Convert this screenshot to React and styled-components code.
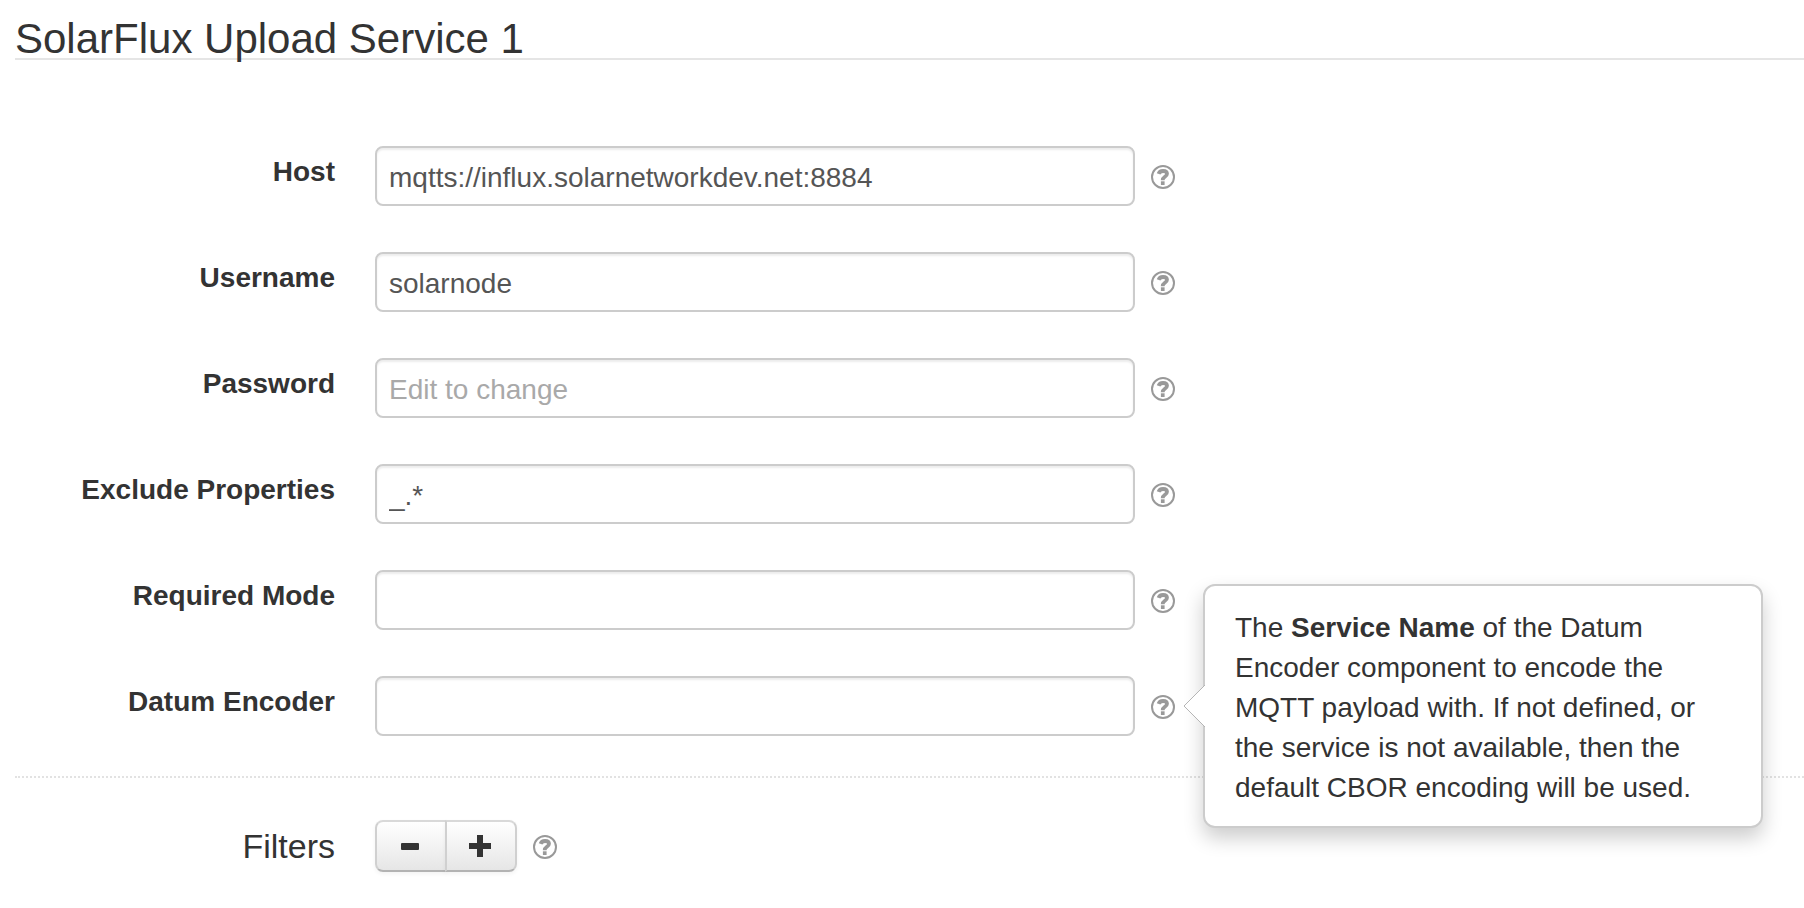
import React from "react";
import styled, { createGlobalStyle } from "styled-components";

const GlobalStyle = createGlobalStyle`
  *, *::before, *::after {
    box-sizing: border-box;
  }
  body {
    margin: 0;
    background: #fff;
    color: #333;
    font-family: "Helvetica Neue", "Liberation Sans", Arial, sans-serif;
    font-size: 28px;
    line-height: 40px;
  }
`;

const Page = styled.main`
  padding: 20px 0 36px 15px;
  overflow-x: hidden;
`;

const Title = styled.h1`
  margin: 0;
  border-bottom: 2px solid #e5e5e5;
  font-size: 42px;
  font-weight: 400;
  line-height: 38px;
`;

const Form = styled.form`
  padding-top: 86px;
`;

const Fields = styled.div`
  display: flex;
  flex-direction: column;
  gap: 46px;
  padding-bottom: 40px;
  border-bottom: 2px dotted #e2e2e2;
`;

const Row = styled.div`
  display: grid;
  grid-template-columns: 320px minmax(0, 1fr);
  column-gap: 40px;
  align-items: start;
`;

const FieldLabel = styled.label`
  padding-top: 6px;
  font-weight: 700;
  text-align: right;
`;

const Controls = styled.div`
  display: flex;
  align-items: center;
  gap: 16px;
`;

const TextInput = styled.input`
  flex: 0 1 760px;
  min-width: 0;
  height: 60px;
  padding: 4px 12px 0;
  border: 2px solid #ccc;
  border-radius: 8px;
  background: #fff;
  box-shadow: inset 0 2px 2px rgba(0, 0, 0, 0.075);
  color: #555;
  font: inherit;
  outline: none;

  &::placeholder {
    color: #a9a9a9;
    opacity: 1;
  }
`;

const HelpAnchor = styled.span`
  position: relative;
  display: flex;
  flex: none;
`;

const HelpButton = styled.button`
  display: block;
  padding: 2px 0 0;
  border: 0;
  background: none;
  color: #999;
  cursor: pointer;

  svg {
    display: block;
  }
`;

const Popover = styled.div`
  position: absolute;
  z-index: 10;
  top: 50%;
  left: 52px;
  width: 560px;
  padding: 22px 30px 18px;
  transform: translateY(-50%);
  border: 2px solid #ccc;
  border-radius: 12px;
  background: #fff;
  box-shadow: 0 10px 20px rgba(0, 0, 0, 0.2);
`;

const PopoverArrow = styled.svg`
  position: absolute;
  top: 50%;
  right: 100%;
  margin-top: -22px;
`;

const GroupRow = styled(Row)`
  align-items: center;
  padding-top: 42px;
`;

const GroupLabel = styled.span`
  font-size: 34px;
  text-align: right;
`;

const ButtonGroup = styled.div`
  display: flex;
`;

const GroupButton = styled.button`
  display: flex;
  align-items: center;
  justify-content: center;
  width: 72px;
  height: 52px;
  padding: 0 2px 0 0;
  border: 2px solid;
  border-color: #d9d9d9 #d0d0d0 #b3b3b3;
  background: linear-gradient(#fff, #e6e6e6);
  box-shadow: 0 2px 4px rgba(0, 0, 0, 0.05);
  color: #333;
  cursor: pointer;

  &:first-child {
    border-radius: 8px 0 0 8px;
  }
  &:last-child {
    margin-left: -2px;
    border-radius: 0 8px 8px 0;
  }
`;

function HelpIcon() {
  return (
    <svg width="24" height="24" viewBox="0 0 24 24" fill="none" aria-hidden="true">
      <circle cx="12" cy="12" r="11" stroke="currentColor" strokeWidth="2" />
      <path
        d="M7.600 8.900C8.200 6.900 9.800 6 12 6c2.400 0 4 1 4 2.800 0 1.700-1.100 2.300-2.400 3.200-1.300.9-1.900 1.500-1.900 3.200"
        stroke="currentColor"
        strokeWidth="3.800"
      />
      <path d="M9.900 16.300h3.700v3.700H9.900z" fill="currentColor" />
    </svg>
  );
}

function Help({ about, children }) {
  return (
    <HelpAnchor>
      <HelpButton type="button" aria-label={`Help for ${about}`}>
        <HelpIcon />
      </HelpButton>
      {children && (
        <Popover role="tooltip">
          <PopoverArrow width="22" height="44" viewBox="0 0 22 44" aria-hidden="true">
            <path d="M22 1L1 22l21 21z" fill="#fff" />
            <path d="M22 1L1 22l21 21" fill="none" stroke="#b5b5b5" />
          </PopoverArrow>
          {children}
        </Popover>
      )}
    </HelpAnchor>
  );
}

const fields = [
  { id: "host", label: "Host", value: "mqtts://influx.solarnetworkdev.net:8884" },
  { id: "username", label: "Username", value: "solarnode" },
  { id: "password", label: "Password", type: "password", placeholder: "Edit to change" },
  { id: "exclude", label: "Exclude Properties", value: "_.*" },
  { id: "mode", label: "Required Mode" },
  {
    id: "encoder",
    label: "Datum Encoder",
    help: (
      <>
        The <strong>Service Name</strong> of the Datum Encoder component to encode the MQTT
        payload with. If not defined, or the service is not available, then the default CBOR
        encoding will be used.
      </>
    ),
  },
];

export default function App() {
  return (
    <>
      <GlobalStyle />
      <Page>
        <Title>SolarFlux Upload Service 1</Title>
        <Form onSubmit={(event) => event.preventDefault()}>
          <Fields>
            {fields.map(({ id, label, type = "text", value = "", placeholder, help }) => (
              <Row key={id}>
                <FieldLabel htmlFor={id}>{label}</FieldLabel>
                <Controls>
                  <TextInput
                    id={id}
                    type={type}
                    defaultValue={value}
                    placeholder={placeholder}
                    spellCheck={false}
                    autoComplete="off"
                  />
                  <Help about={label}>{help}</Help>
                </Controls>
              </Row>
            ))}
          </Fields>
          <GroupRow role="group" aria-labelledby="filters-label">
            <GroupLabel id="filters-label">Filters</GroupLabel>
            <Controls>
              <ButtonGroup>
                <GroupButton type="button" aria-label="Remove filter">
                  <svg width="22" height="22" viewBox="0 0 22 22" aria-hidden="true">
                    <rect x="2" y="8" width="18" height="7" rx="1" fill="currentColor" />
                  </svg>
                </GroupButton>
                <GroupButton type="button" aria-label="Add filter">
                  <svg width="22" height="22" viewBox="0 0 22 22" aria-hidden="true">
                    <path d="M8 0h6v8h8v6h-8v8H8v-8H0V8h8z" fill="currentColor" />
                  </svg>
                </GroupButton>
              </ButtonGroup>
              <Help about="Filters" />
            </Controls>
          </GroupRow>
        </Form>
      </Page>
    </>
  );
}
